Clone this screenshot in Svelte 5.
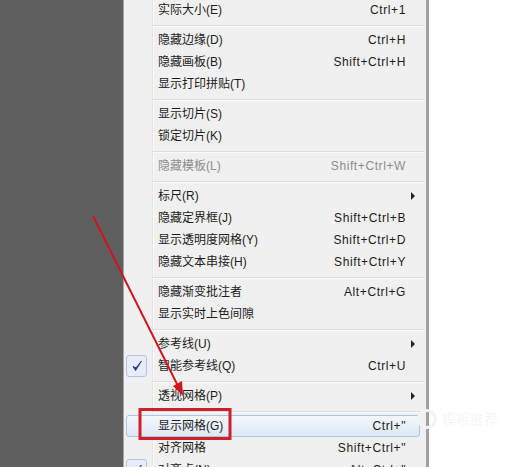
<script>
  const sections = [
    [{ t: '实际大小(E)', k: 'Ctrl+1' }],
    [{ t: '隐藏边缘(D)', k: 'Ctrl+H' }, { t: '隐藏画板(B)', k: 'Shift+Ctrl+H' }, { t: '显示打印拼贴(T)' }],
    [{ t: '显示切片(S)' }, { t: '锁定切片(K)' }],
    [{ t: '隐藏模板(L)', k: 'Shift+Ctrl+W', off: true }],
    [{ t: '标尺(R)', sub: true }, { t: '隐藏定界框(J)', k: 'Shift+Ctrl+B' }, { t: '显示透明度网格(Y)', k: 'Shift+Ctrl+D' }, { t: '隐藏文本串接(H)', k: 'Shift+Ctrl+Y' }],
    [{ t: '隐藏渐变批注者', k: 'Alt+Ctrl+G' }, { t: '显示实时上色间隙' }],
    [{ t: '参考线(U)', sub: true }, { t: '智能参考线(Q)', k: 'Ctrl+U', check: true }],
    [{ t: '透视网格(P)', sub: true }],
    [{ t: '显示网格(G)', k: 'Ctrl+"', hot: true }, { t: '对齐网格', k: 'Shift+Ctrl+"' }, { t: '对齐点(N)', k: 'Alt+Ctrl+"', check: true }]
  ];
</script>

<div class="page">
  <div class="dark"></div>
  <div class="menu">
    <div class="gutter"></div>
    {#each sections as section, i}
      {#if i > 0}<div class="sep"></div>{/if}
      {#each section as item}
        <div class="row" class:off={item.off} class:hot={item.hot}>
          {#if item.check}
            <span class="check">
              <svg width="12" height="12" viewBox="0 0 12 12"><path d="M2 6.5 L4.6 10.5 L10.5 1 L5 7.8 Z" fill="#1f2f8c" stroke="#1f2f8c" stroke-width="0.8" stroke-linejoin="round"/></svg>
            </span>
          {/if}
          <span class="label">{item.t}</span>
          {#if item.k}<span class="key">{item.k}</span>{/if}
          {#if item.sub}<span class="arrow"></span>{/if}
        </div>
      {/each}
    {/each}
  </div>
  <div class="shadow"></div>
  <div class="right"></div>

  <div class="mark">
    <span class="mark-logo"></span>
    <span class="mark-text">模板推荐</span>
  </div>

  <svg class="overlay" width="519" height="467" viewBox="0 0 519 467">
    <line x1="93" y1="216" x2="179" y2="388" stroke="#d4141c" stroke-width="2"/>
    <path d="M183 396 L173 386 L182 381 Z" fill="#d4141c"/>
    <rect x="140" y="409.5" width="90" height="29" fill="none" stroke="#cf1f28" stroke-width="3"/>
  </svg>
</div>

<style>
  :global(body) { margin: 0; background: #fff; }
  .page {
    position: relative;
    display: flex;
    width: 519px;
    height: 467px;
    overflow: hidden;
    font-family: "Liberation Sans", "Noto Sans CJK SC", sans-serif;
    font-size: 12px;
    color: #1c1c1c;
  }
  .dark { flex: 0 0 123px; background: #5f5f5f; }
  .menu {
    position: relative;
    flex: 0 0 303px;
    background: #f0f0f0;
    border-left: 1px solid #a5a5a5;
    box-sizing: border-box;
    margin-top: -1px;
    padding-right: 1px;
    height: 600px;
  }
  .gutter { position: absolute; left: 28px; top: 0; bottom: 0; width: 1px; background: #e4e4e4; border-right: 1px solid #fafafa; }
  .shadow { flex: 0 0 3px; background: #a0a0a0; }
  .right { flex: 1; background: #fff; }
  .row {
    position: relative;
    display: flex;
    align-items: center;
    height: 22px;
    padding-left: 34px;
  }
  .label { flex: 1; padding-bottom: 3px; }
  .key { position: absolute; right: 19px; letter-spacing: 0.6px; }
  .off { color: #8d8d8d; }
  .hot::before {
    content: "";
    position: absolute;
    left: 2px; right: 5px; top: 0; bottom: 0;
    box-sizing: border-box;
    border: 1px solid #a8c6e6;
    border-radius: 3px;
    background: linear-gradient(#f3f7fc, #dde8f5);
  }
  .hot > span { position: relative; }
  .hot > .key { position: absolute; }
  .sep { position: relative; height: 8px; display: flex; align-items: center; margin-left: 29px; margin-right: 1px; }
  .sep::before { content: ""; flex: 1; height: 1px; background: #dcdcdc; box-shadow: 0 1px 0 #fbfbfb; }
  .check {
    position: absolute;
    left: 2px; top: 0;
    width: 21px; height: 22px;
    display: flex; align-items: center; justify-content: center;
    box-sizing: border-box;
    background: #e8ecf8;
    border: 1px solid #b3c4e0;
    border-radius: 3px;
  }
  .arrow {
    position: absolute;
    right: 10px;
    width: 0; height: 0;
    border-left: 4px solid #222;
    border-top: 4px solid transparent;
    border-bottom: 4px solid transparent;
  }
  .mark {
    position: absolute;
    left: 417px; top: 409px;
    display: flex; align-items: center; gap: 5px;
    color: #f6f6f6;
    font-size: 14px;
    line-height: 20px;
  }
  .mark-logo { width: 20px; height: 20px; box-sizing: border-box; border: 3px solid #f1f3f5; border-radius: 50%; }
  .overlay { position: absolute; left: 0; top: 0; pointer-events: none; }
</style>
